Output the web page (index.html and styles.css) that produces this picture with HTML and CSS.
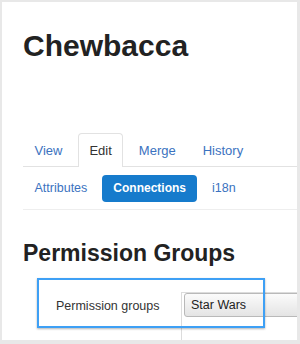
FILE: index.html
```html
<!DOCTYPE html>
<html lang="en">
<head>
  <meta charset="UTF-8">
  <meta name="viewport" content="width=device-width, initial-scale=1.0">
  <title>Chewbacca</title>
<link rel="stylesheet" href="styles.css">
</head>
<body>
<div class="page">
    <h1>Chewbacca</h1>

    <ul class="tabs">
        <li><a href="#">View</a></li>
        <li class="active"><a href="#">Edit</a></li>
        <li><a href="#">Merge</a></li>
        <li><a href="#">History</a></li>
    </ul>

    <ul class="pills">
        <li><a href="#">Attributes</a></li>
        <li class="active"><a href="#">Connections</a></li>
        <li><a href="#">i18n</a></li>
    </ul>

    <h2>Permission Groups</h2>

    <div class="form-row">
        <label class="form-label">Permission groups</label>
        <div class="form-cell">
            <div class="select">Star Wars</div>
        </div>
    </div>

    <!-- highlight box over the field -->
    <div class="highlight"></div>
</div>
</body>
</html>
```

FILE: styles.css
```css
body {
  margin: 0;
  background: #e8e8e8;
  font-family: "Liberation Sans", Arial, sans-serif;
  color: #333;
}

.page {
  position: relative;
  margin: 2px 3px 4px 2px;
  height: 338px;
  padding-left: 21px;
  background: #fff;
  overflow: hidden;
}

h1 {
  margin: 0;
  padding-top: 26px;
  font-size: 30px;
  line-height: 36px;
  color: #222;
}

ul {
  list-style: none;
  margin: 0;
  padding: 0;
  display: flex;
}

a {
  text-decoration: none;
  color: #3b72c0;
}

.tabs {
  margin-top: 69px;
  border-bottom: 1px solid #e2e2e2;
  font-size: 13px;
}
.tabs li {
  margin-right: 4px;
  margin-bottom: -1px;
}
.tabs a {
  display: block;
  padding: 0 10.5px;
  line-height: 33px;
  border: 1px solid transparent;
  border-bottom: none;
  border-radius: 4px 4px 0 0;
}
.tabs .active a {
  color: #333;
  background: #fff;
  border-color: #e2e2e2;
  height: 34px;
  box-sizing: border-box;
}

.pills {
  padding: 8px 0 7px;
  border-bottom: 1px solid #eee;
  font-size: 12.5px;
}
.pills li {
  margin-right: 3px;
}
.pills a {
  display: block;
  padding: 0 11.5px;
  line-height: 27px;
  border-radius: 4px;
}
.pills .active a {
  color: #fff;
  background: #167bcc;
  font-size: 12px;
  font-weight: bold;
}

h2 {
  margin: 29px 0 0;
  font-size: 23px;
  line-height: 28px;
  color: #222;
}

.form-row {
  display: flex;
  margin-top: 25px;
}

.form-label {
  width: 125px;
  padding: 2px 0 0 33px;
  font-size: 12.5px;
  line-height: 24px;
  color: #333;
}

.form-cell {
  flex: 1;
  height: 60px;
  padding-left: 2px;
  border-left: 1px solid #dcdcdc;
  border-top: 1px solid #dcdcdc;
}

.select {
  height: 24px;
  box-sizing: border-box;
  padding-left: 6px;
  margin-right: -10px;
  border: 1px solid #b9b9b9;
  border-radius: 3px;
  background: linear-gradient(#fbfbfb, #e4e4e4);
  font-size: 12.5px;
  line-height: 22px;
  color: #222;
}

.highlight {
  position: absolute;
  left: 35px;
  top: 276px;
  width: 228px;
  height: 50px;
  box-sizing: border-box;
  border: 2px solid #3ea0f5;
  box-shadow: 0 1px 2px rgba(0, 0, 0, 0.3);
}
```
